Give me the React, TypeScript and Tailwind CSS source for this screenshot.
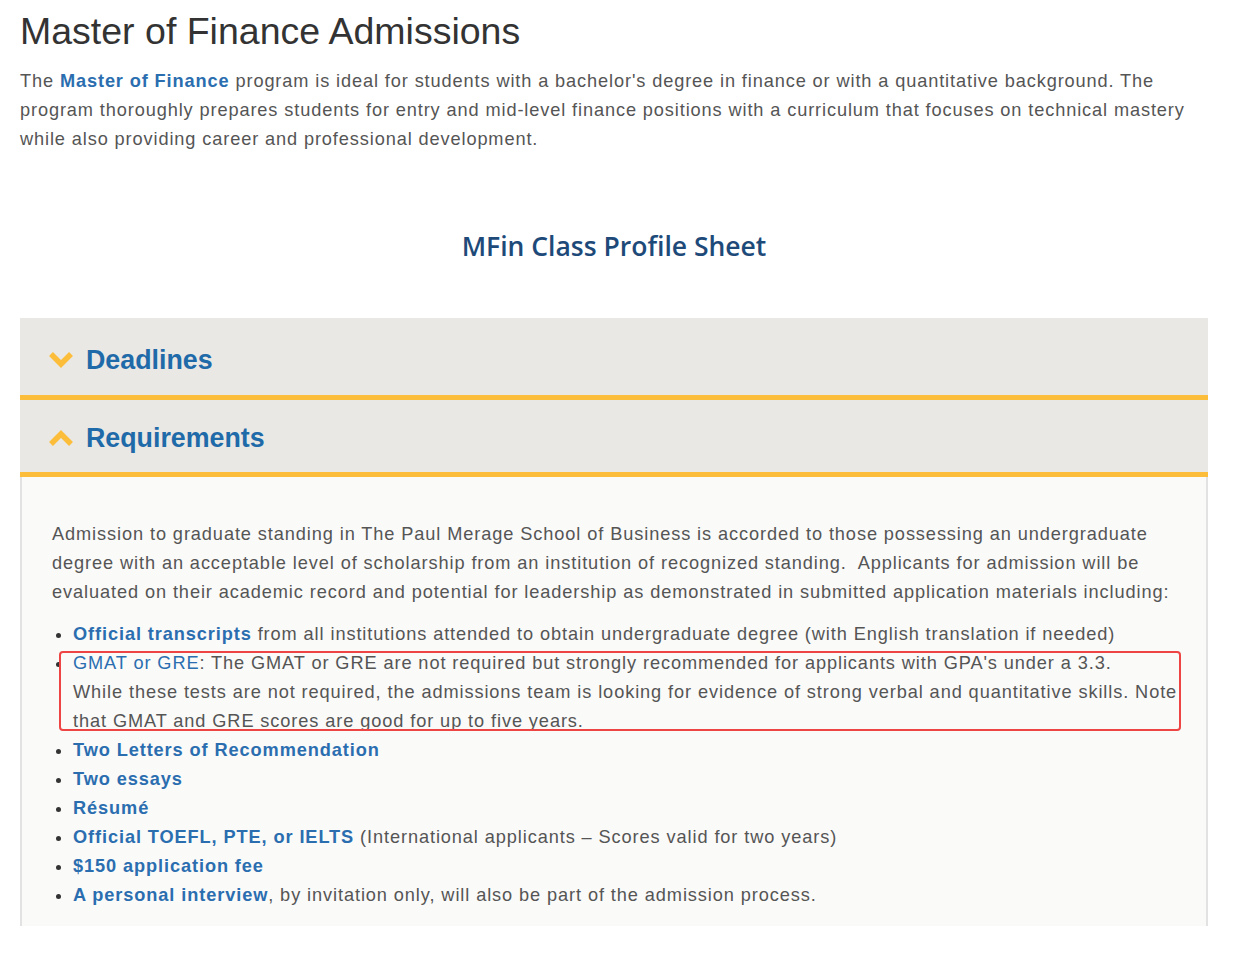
import React from "react";

const Chevron = ({ up }: { up?: boolean }) => (
  <svg width="28" height="20" viewBox="0 0 28 20" className="shrink-0">
    <path
      d={up ? "M4 16 L14 6 L24 16" : "M4 4 L14 14 L24 4"}
      fill="none"
      stroke="#fbbd3a"
      strokeWidth="5.5"
      strokeLinecap="butt"
      strokeLinejoin="miter"
    />
  </svg>
);

const Line = ({ children }: { children: React.ReactNode }) => (
  <span className="block whitespace-nowrap">{children}</span>
);

const B = ({ children }: { children: React.ReactNode }) => (
  <span className="font-bold text-[#2b6eb0]">{children}</span>
);

export default function App() {
  return (
    <div className="w-[1244px] h-[954px] bg-white pl-[20px] pr-[36px] font-['Liberation_Sans',Arial,sans-serif] text-[#555]">
      <h1 className="pt-[9px] text-[37.5px] leading-[44px] text-[#333] font-normal">Master of Finance Admissions</h1>
      <p className="mt-[14px] text-[18.2px] leading-[29px] tracking-[0.88px] text-[#555]">
        <Line>
          The <B>Master of Finance</B> program is ideal for students with a bachelor's degree in finance or with a quantitative background. The
        </Line>
        <Line>
          program thoroughly prepares students for entry and mid-level finance positions with a curriculum that focuses on technical mastery
        </Line>
        <Line>while also providing career and professional development.</Line>
      </p>
      <h2 className="mt-[74px] text-center text-[26.5px] leading-[36px] font-semibold text-[#1e4a7a] font-['Open_Sans',sans-serif]">
        MFin Class Profile Sheet
      </h2>
      <div className="mt-[54px] w-[1188px]">
        <div className="h-[77px] bg-[#eae8e5] flex items-center pl-[27px] pt-[7px] gap-[11px]">
          <Chevron />
          <span className="text-[26.8px] font-bold text-[#1f6aa8]">Deadlines</span>
        </div>
        <div className="h-[5px] bg-[#fbbd3a]" />
        <div className="h-[72px] bg-[#eae8e5] flex items-center pl-[27px] pt-[4px] gap-[11px]">
          <Chevron up />
          <span className="text-[26.8px] font-bold text-[#1f6aa8]">Requirements</span>
        </div>
        <div className="h-[5px] bg-[#fbbd3a]" />
        <div className="bg-[#fafaf9] border-l-2 border-r-2 border-[#e2e2e2] pl-[30px] pr-[20px] pt-[43px] pb-[16px] text-[18.2px] leading-[29px] tracking-[0.9px] text-[#555]">
          <p>
            <Line>
              Admission to graduate standing in The Paul Merage School of Business is accorded to those possessing an undergraduate
            </Line>
            <Line>
              degree with an acceptable level of scholarship from an institution of recognized standing.&nbsp; Applicants for admission will be
            </Line>
            <Line>
              evaluated on their academic record and potential for leadership as demonstrated in submitted application materials including:
            </Line>
          </p>
          <ul className="mt-[13px] list-disc pl-[21px] marker:text-[#333]">
            <li>
              <B>Official transcripts</B> from all institutions attended to obtain undergraduate degree (with English translation if needed)
            </li>
            <li className="relative">
              <span className="text-[#2b6eb0]">GMAT or GRE</span>: The GMAT or GRE are not required but strongly recommended for applicants with GPA's under a 3.3.
              <Line>
                While these tests are not required, the admissions team is looking for evidence of strong verbal and quantitative skills. Note
              </Line>
              <Line>that GMAT and GRE scores are good for up to five years.</Line>
              <div className="absolute left-[-14px] w-[1122px] top-[2px] bottom-[5px] border-2 border-[#ef4444] rounded-[4px] pointer-events-none" />
            </li>
            <li><B>Two Letters of Recommendation</B></li>
            <li><B>Two essays</B></li>
            <li><B>Résumé</B></li>
            <li>
              <B>Official TOEFL, PTE, or IELTS</B> (International applicants – Scores valid for two years)
            </li>
            <li><B>$150 application fee</B></li>
            <li>
              <B>A personal interview</B>, by invitation only, will also be part of the admission process.
            </li>
          </ul>
        </div>
      </div>
    </div>
  );
}
